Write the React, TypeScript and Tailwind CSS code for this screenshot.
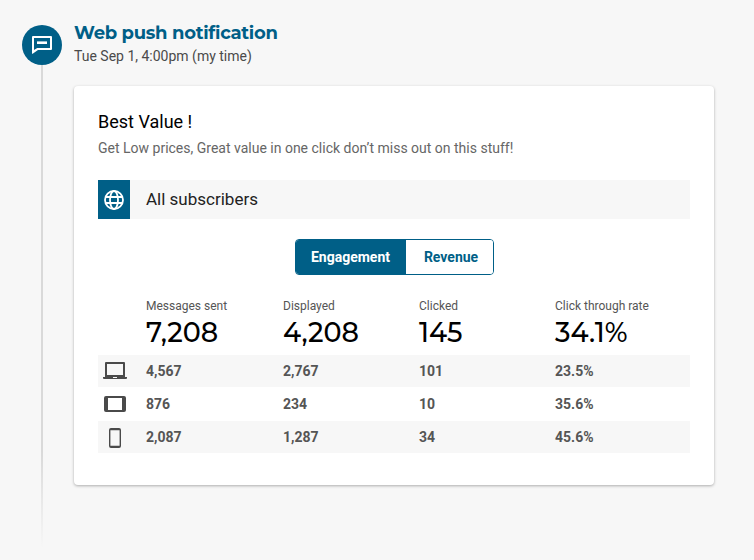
const heading = "font-['Montserrat','Lato','Noto_Sans',sans-serif]";

const totals = [
  { label: "Messages sent", value: "7,208" },
  { label: "Displayed", value: "4,208" },
  { label: "Clicked", value: "145" },
  { label: "Click through rate", value: "34.1%" },
];

const rows = [
  { device: "laptop", height: "h-8", values: ["4,567", "2,767", "101", "23.5%"] },
  { device: "tablet", height: "h-[34px]", values: ["876", "234", "10", "35.6%"] },
  { device: "phone", height: "h-8", values: ["2,087", "1,287", "34", "45.6%"] },
];

function DeviceIcon({ device }: { device: string }) {
  if (device === "laptop") {
    return (
      <svg width="24" height="18" viewBox="0 0 24 18" fill="#4a4a4a">
        <path d="M3 0h18a1 1 0 0 1 1 1v14H2V1a1 1 0 0 1 1-1zm1 2v11h16V2z" fillRule="evenodd" />
        <path d="M0 15h10v1h4v-1h10v1a1 1 0 0 1-1 1H1a1 1 0 0 1-1-1z" />
      </svg>
    );
  }
  if (device === "tablet") {
    return (
      <svg width="22" height="16" viewBox="0 0 22 16" fill="#4a4a4a">
        <path d="M2 0h18a2 2 0 0 1 2 2v12a2 2 0 0 1-2 2H2a2 2 0 0 1-2-2V2a2 2 0 0 1 2-2zm2 2v12h14V2z" fillRule="evenodd" />
      </svg>
    );
  }
  return (
    <svg width="12" height="20" viewBox="0 0 12 20" fill="#4a4a4a" className="mt-0.5">
      <path d="M2 0h8a2 2 0 0 1 2 2v16a2 2 0 0 1-2 2H2a2 2 0 0 1-2-2V2a2 2 0 0 1 2-2zm-.6 2.2v15.6h9.2V2.2z" fillRule="evenodd" />
    </svg>
  );
}

export default function App() {
  return (
    <div className="flex h-[560px] w-[754px] gap-3 overflow-hidden bg-[#f7f7f7] pl-[22px] pt-[25px] font-['Roboto',sans-serif]">
      {/* timeline rail */}
      <div className="flex w-10 flex-col items-center">
        <div className="flex h-10 w-10 shrink-0 items-center justify-center rounded-full bg-[#005f87]">
          <svg width="20" height="18" viewBox="0 0 20 18" fill="#fff">
            <path d="M1 0h18a1 1 0 0 1 1 1v12a1 1 0 0 1-1 1H6l-5 3.6A.6.6 0 0 1 0 17V1a1 1 0 0 1 1-1zm1 2v12l3.2-2H18V2z" fillRule="evenodd" />
            <rect x="5" y="5.4" width="10" height="2.6" />
          </svg>
        </div>
        <div className="h-[483px] w-0.5 bg-gradient-to-b from-[#d9d9d9] from-80% to-[#f7f7f7]" />
      </div>

      <div className="w-[640px]">
        <h1 className={`${heading} mt-[-3px] mb-[3px] text-lg leading-[22px] font-bold tracking-[-0.3px] text-[#005f87]`}>
          Web push notification
        </h1>
        <p className="mt-[3px] text-sm leading-[18px] text-[#4a4a4a]">Tue Sep 1, 4:00pm (my time)</p>

        <div className="mt-[21px] h-[399px] rounded bg-white px-6 pt-[25px] shadow-[0_1px_3px_rgba(0,0,0,0.3)]">
          <h2 className="text-lg leading-[22px] text-black">Best Value !</h2>
          <p className="mt-[6px] text-sm leading-[18px] text-[#666]">
            Get Low prices, Great value in one click don’t miss out on this stuff!
          </p>

          <div className="mt-[23px] flex h-[39px] items-center bg-[#f7f7f7]">
            <div className="flex h-full w-8 items-center justify-center bg-[#005f87]">
              <svg width="20" height="20" viewBox="0 0 20 20" fill="none" stroke="#fff" strokeWidth="1.8">
                <circle cx="10" cy="10" r="9" />
                <ellipse cx="10" cy="10" rx="4" ry="9" />
                <path d="M1.5 7h17M1.5 13h17" />
              </svg>
            </div>
            <span className="ml-4 text-[17px] text-[#222]">All subscribers</span>
          </div>

          <div className="mt-[20px] flex justify-center">
            <div className="flex h-9 overflow-hidden rounded border border-[#005f87] text-sm font-bold">
              <button className="w-[110px] bg-[#005f87] text-white">Engagement</button>
              <button className="w-[87px] bg-white pl-1 text-[#005f87]">Revenue</button>
            </div>
          </div>

          <div className="mt-[23px] grid grid-cols-[48px_137px_136px_136px_1fr]">
            <div />
            {totals.map((t) => (
              <div key={t.label} className="h-[57px]">
                <div className="text-xs leading-[16px] text-[#555]">{t.label}</div>
                <div className={`${heading} mt-[4px] text-[27px] leading-[30px] font-medium text-black`}>{t.value}</div>
              </div>
            ))}
          </div>

          <div className="flex flex-col">
            {rows.map((r, i) => (
              <div
                key={r.device}
                className={`grid ${r.height} grid-cols-[48px_137px_136px_136px_1fr] items-center text-sm font-bold text-[#555] ${
                  i % 2 === 0 ? "bg-[#f7f7f7]" : "bg-white"
                }`}
              >
                <div className="flex justify-center pr-[14px]">
                  <DeviceIcon device={r.device} />
                </div>
                {r.values.map((v) => (
                  <div key={v}>{v}</div>
                ))}
              </div>
            ))}
          </div>
        </div>
      </div>
    </div>
  );
}
